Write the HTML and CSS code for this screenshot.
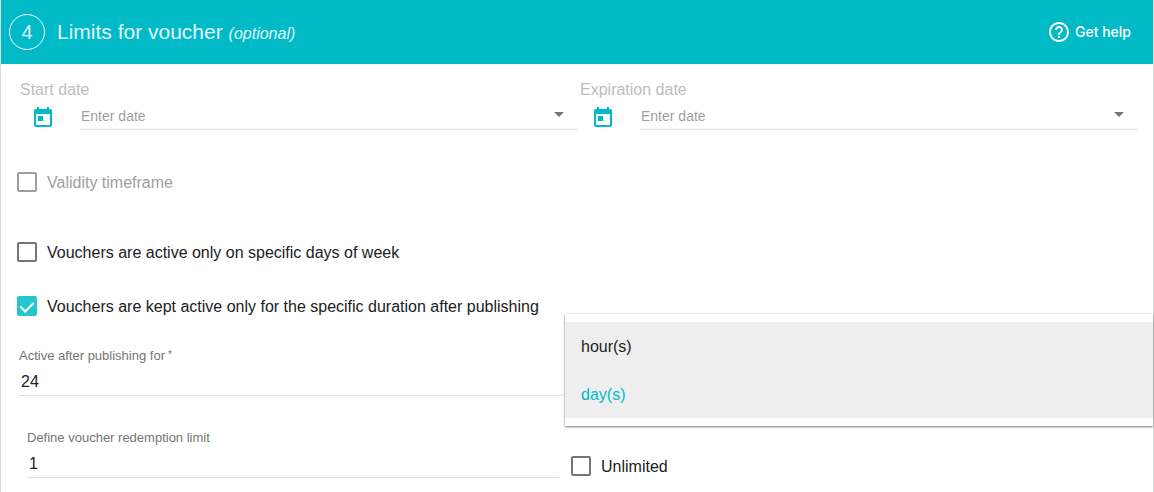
FILE: index.html
```html
<!DOCTYPE html>
<html lang="en">
<head>
    <meta charset="UTF-8">
    <meta name="viewport" content="width=device-width, initial-scale=1.0">
    <title>Limits for voucher</title>
    <link rel="stylesheet" href="styles.css">
</head>
<body>
    <form class="card">
        <header class="card-header">
            <span class="step">4</span>
            <h2>Limits for voucher <em>(optional)</em></h2>
            <button type="button" class="help">
                <svg width="24" height="24" viewBox="0 0 24 24" fill="currentColor" aria-hidden="true">
                    <path d="M11 18h2v-2h-2v2zm1-16C6.48 2 2 6.48 2 12s4.48 10 10 10 10-4.480 10-10S17.520 2 12 2zm0 18c-4.410 0-8-3.590-8-8s3.590-8 8-8 8 3.590 8 8-3.590 8-8 8zm0-14c-2.210 0-4 1.790-4 4h2c0-1.100.9-2 2-2s2 .9 2 2c0 2-3 1.750-3 5h2c0-2.250 3-2.500 3-5 0-2.210-1.790-4-4-4z"/>
                </svg>
                Get help
            </button>
        </header>

        <div class="dates">
            <div class="date">
                <label for="start">Start date</label>
                <div class="date-row">
                    <svg class="calendar" width="24" height="24" viewBox="0 0 24 24" aria-hidden="true">
                        <path d="M19 3h-1V1h-2v2H8V1H6v2H5c-1.110 0-2 .9-2 2v14c0 1.100.89 2 2 2h14c1.100 0 2-.9 2-2V5c0-1.100-.9-2-2-2zm0 16H5V8h14v11zM7 10h5v5H7z"/>
                    </svg>
                    <div class="date-input">
                        <input type="text" id="start" placeholder="Enter date">
                        <button type="button" class="caret" aria-label="Open start date calendar"></button>
                    </div>
                </div>
            </div>
            <div class="date">
                <label for="expiration">Expiration date</label>
                <div class="date-row">
                    <svg class="calendar" width="24" height="24" viewBox="0 0 24 24" aria-hidden="true">
                        <path d="M19 3h-1V1h-2v2H8V1H6v2H5c-1.110 0-2 .9-2 2v14c0 1.100.89 2 2 2h14c1.100 0 2-.9 2-2V5c0-1.100-.9-2-2-2zm0 16H5V8h14v11zM7 10h5v5H7z"/>
                    </svg>
                    <div class="date-input">
                        <input type="text" id="expiration" placeholder="Enter date">
                        <button type="button" class="caret" aria-label="Open expiration date calendar"></button>
                    </div>
                </div>
            </div>
        </div>

        <div class="checks">
            <label class="check check-disabled"><input type="checkbox" disabled><span>Validity timeframe</span></label>
            <label class="check check-days"><input type="checkbox"><span>Vouchers are active only on specific days of week</span></label>
            <label class="check"><input type="checkbox" checked><span>Vouchers are kept active only for the specific duration after publishing</span></label>
        </div>

        <div class="duration">
            <div class="field">
                <label for="active">Active after publishing for<sup>*</sup></label>
                <input type="text" id="active" value="24" required>
            </div>
            <div class="unit">
                <select id="unit" aria-label="Duration unit">
                    <option>hour(s)</option>
                    <option selected>day(s)</option>
                </select>
                <div class="menu">
                    <button type="button">hour(s)</button>
                    <button type="button" class="selected">day(s)</button>
                </div>
            </div>
        </div>

        <div class="redemption">
            <div class="field">
                <label for="limit">Define voucher redemption limit</label>
                <input type="text" id="limit" value="1">
            </div>
            <label class="check"><input type="checkbox"><span>Unlimited</span></label>
        </div>
    </form>
    <script>
        const unit = document.getElementById("unit");
        const items = document.querySelectorAll(".menu button");

        items.forEach((item, i) => {
            item.onclick = () => {
                unit.selectedIndex = i;
                items.forEach(other => other.classList.toggle("selected", other === item));
            };
        });
    </script>
</body>
</html>
```
FILE: styles.css
```css
* { box-sizing: border-box; }
body { margin: 0; background: #fff; color: #212121; font-family: "Liberation Sans", Arial, sans-serif; font-size: 16px; line-height: 20px; }
button, input, select { font: inherit; color: inherit; border: none; padding: 0; margin: 0; background: none; outline: none; }
button { cursor: pointer; }

.card { min-height: 100vh; border: 1px solid #d8dcdc; border-width: 0 1px; }
.card-header { display: flex; align-items: center; height: 64px; padding: 0 22px 0 8px; background: #00bac8; color: #fff; }
.step { width: 36px; height: 36px; border: 1px solid #fff; border-radius: 50%; font-size: 20px; line-height: 34px; text-align: center; color: #e0f7f9; }
.card-header h2 { flex: 1; margin: 0 0 0 12px; padding-top: 2px; font-size: 21px; font-weight: normal; line-height: 24px; color: #e0f7f9; }
.card-header em { font-size: 16px; }
.help { display: flex; align-items: center; gap: 4px; font-size: 14px; font-weight: 500; font-family: Inter, sans-serif; }

.dates { display: grid; grid-template-columns: 1fr 1fr; padding: 16px 16px 0; }
.date > label { display: block; padding-left: 3px; color: #bdbdbd; }
.date-row { display: flex; gap: 26px; margin-top: 6px; padding-left: 14px; }
.calendar { flex: none; fill: #00bac8; }
.date-input { display: flex; flex: 1; height: 24px; padding-bottom: 4px; border-bottom: 1px solid #e0e0e0; font-size: 14px; }
.date-input input { flex: 1; min-width: 0; }
.date-input input::placeholder { color: #9e9e9e; opacity: 1; }
.caret { width: 36px; display: flex; justify-content: center; padding-top: 6px; }
.caret::before { content: ""; border: 5px solid transparent; border-top-color: #757575; border-bottom: 0; }

.checks { padding: 42px 16px 0; }
.check { display: flex; align-items: center; gap: 10px; height: 20px; }
.check span { padding-top: 2px; }
.check input { appearance: none; flex: none; width: 20px; height: 20px; border: 2px solid #757575; border-radius: 2px; }
.check input:checked { display: flex; justify-content: center; align-items: center; padding-bottom: 2px; border-color: #26c6d0; background: #26c6d0; }
.check input:checked::before { content: ""; width: 6px; height: 11px; border: solid #fff; border-width: 0 2px 2px 0; transform: rotate(45deg); }
.check-disabled { color: #9e9e9e; margin-bottom: 50px; }
.check-disabled input { border-color: #9e9e9e; }
.check-days { margin-bottom: 34px; }

.field label { display: block; font-size: 13px; line-height: 18px; color: #757575; }
.field sup { margin-left: 3px; font-size: 10px; line-height: 0; vertical-align: 2px; }
.field input { display: block; width: 100%; height: 26px; margin-top: 5px; padding: 0 2px 2px; border-bottom: 1px solid #e0e0e0; }

.duration { display: grid; grid-template-columns: 13fr 14fr; padding: 31px 0 0 18px; }
.unit { position: relative; }
.unit select { width: 100%; height: 26px; margin-top: 23px; }
.menu { position: absolute; top: -33px; left: 0; right: 0; padding: 8px 0; background: #fff; box-shadow: 0 1px 2px rgba(0, 0, 0, .5), 0 0 2px rgba(0, 0, 0, .1); }
.menu button { display: block; width: 100%; height: 48px; padding: 2px 16px 0; text-align: left; background: #eee; }
.menu .selected { color: #00bac8; }

.redemption { display: grid; grid-template-columns: 1fr 1fr; gap: 12px; padding: 33px 50px 16px 26px; }
.redemption .check { margin-top: 27px; }
```
